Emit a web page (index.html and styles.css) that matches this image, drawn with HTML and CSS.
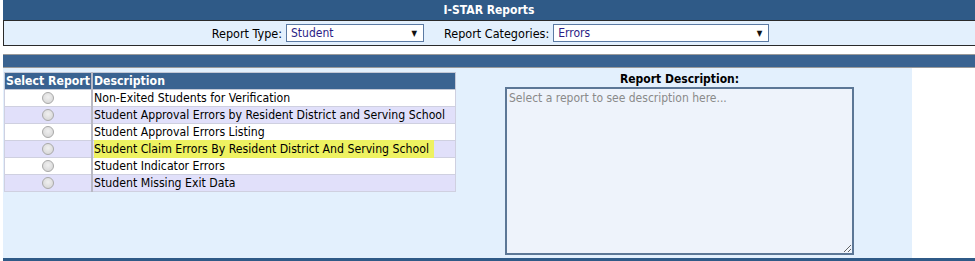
FILE: index.html
```html
<!DOCTYPE html>
<html lang="en">
<head>
  <meta charset="UTF-8">
  <title>I-STAR Reports</title>
  <link rel="stylesheet" href="styles.css">
</head>
<body>

  <div class="page">
    <header class="title">I-STAR Reports</header>

    <div class="filters">
      <label class="field">
        <span>Report Type:</span>
        <span class="select sel-type">Student<i>&#9660;</i></span>
      </label>
      <label class="field">
        <span>Report Categories:</span>
        <span class="select sel-cat">Errors<i>&#9660;</i></span>
      </label>
    </div>

    <div class="bar"></div>

    <main class="content">
      <section class="list">
        <table class="reports">
          <thead>
            <tr><th class="col-pick">Select Report</th><th>Description</th></tr>
          </thead>
          <tbody>
            <tr><td class="col-pick"><span class="radio"></span></td><td>Non-Exited Students for Verification</td></tr>
            <tr class="alt"><td class="col-pick"><span class="radio"></span></td><td>Student Approval Errors by Resident District and Serving School</td></tr>
            <tr><td class="col-pick"><span class="radio"></span></td><td>Student Approval Errors Listing</td></tr>
            <tr class="alt"><td class="col-pick"><span class="radio"></span></td><td><mark>Student Claim Errors By Resident District And Serving School</mark></td></tr>
            <tr><td class="col-pick"><span class="radio"></span></td><td>Student Indicator Errors</td></tr>
            <tr class="alt"><td class="col-pick"><span class="radio"></span></td><td>Student Missing Exit Data</td></tr>
          </tbody>
        </table>
      </section>

      <section class="desc">
        <div class="desc-title">Report Description:</div>
        <textarea class="desc-box" placeholder="Select a report to see description here..."></textarea>
      </section>
    </main>

    <div class="foot"></div>
  </div>

</body>
</html>
```

FILE: styles.css
```css
:root {
  --navy: #2f5a87;
  --bar: #3a6391;
  --pale: #e3f0fd;
  --lav: #e1e0fa;
  --font: "DejaVu Sans Condensed", "DejaVu Sans", sans-serif;
}
* { box-sizing: border-box; margin: 0; padding: 0; }
body {
  background: #fff;
  color: #000;
  font-family: var(--font);
  font-size: 11px;
}

.page {
  margin-left: 3px;
}

.title {
  height: 20px;
  line-height: 20px;
  background: var(--navy);
  color: #fff;
  font-weight: bold;
  font-size: 12px;
  text-align: center;
}

.filters {
  display: flex;
  justify-content: center;
  align-items: center;
  gap: 20px;
  height: 26px;
  padding-left: 2px;
  background: var(--pale);
  border-top: 1px solid #2a2a2a;
  border-left: 1px solid #2a2a2a;
  border-bottom: 1px solid #2a2a2a;
}
.field {
  display: flex;
  align-items: center;
  gap: 4px;
  font-size: 12.5px;
}
.select {
  display: flex;
  align-items: center;
  justify-content: space-between;
  height: 18px;
  padding: 0 6px 0 4px;
  background: #fff;
  border: 1px solid #5b7aa3;
  color: #2b1d86;
  font-size: 12px;
}
.select i {
  font-style: normal;
  font-size: 8px;
  color: #111;
}
.sel-type { width: 138px; }
.sel-cat { width: 216px; }

.bar {
  margin-top: 8px;
  height: 14px;
  background: var(--bar);
  border-top: 1px solid #9a9a9a;
  border-bottom: 1px solid #9a9a9a;
}

.content {
  display: grid;
  grid-template-columns: 455px 454px;
  height: 190px;
}
.list,
.desc {
  background: var(--pale);
}

.reports {
  margin: 4px 0 0 1px;
  width: 452px;
  border-collapse: collapse;
  font-size: 12.2px;
  line-height: 15px;
}
.reports th {
  height: 17px;
  background: var(--bar);
  color: #fff;
  text-align: left;
  padding: 0 1px;
  border: 1px solid #c3c8d6;
  font-weight: bold;
  white-space: nowrap;
}
.reports td {
  height: 17px;
  padding: 0 1px;
  border: 1px solid #cfd0e0;
  background: #fff;
  white-space: nowrap;
}
.reports tr.alt td { background: var(--lav); }
.reports .col-pick {
  width: 87px;
  text-align: center;
  border-right: 2px solid #b9b9c4;
}
.radio {
  display: inline-block;
  vertical-align: middle;
  width: 12px;
  height: 12px;
  border-radius: 50%;
  border: 1px solid #a9a9a9;
  background: radial-gradient(circle at 50% 40%, #f0f0f0, #d2d2d2);
}
mark {
  background: #eef261;
  color: #000;
  padding: 2px 5px 2px 0;
}

.desc {
  padding-left: 47px;
}
.desc-title {
  width: 349px;
  margin-top: 5px;
  text-align: center;
  font-weight: bold;
  font-size: 12px;
  line-height: 13px;
}
.desc-box {
  display: block;
  width: 349px;
  height: 168px;
  margin-top: 1px;
  padding: 2px 2px;
  background: #eef3fb;
  border: 2px solid #5c7796;
  font-family: var(--font);
  font-size: 12px;
  resize: both;
  outline: none;
}
.desc-box::placeholder { color: #8a8a8a; }

.foot {
  height: 3px;
  background: var(--navy);
}
```
